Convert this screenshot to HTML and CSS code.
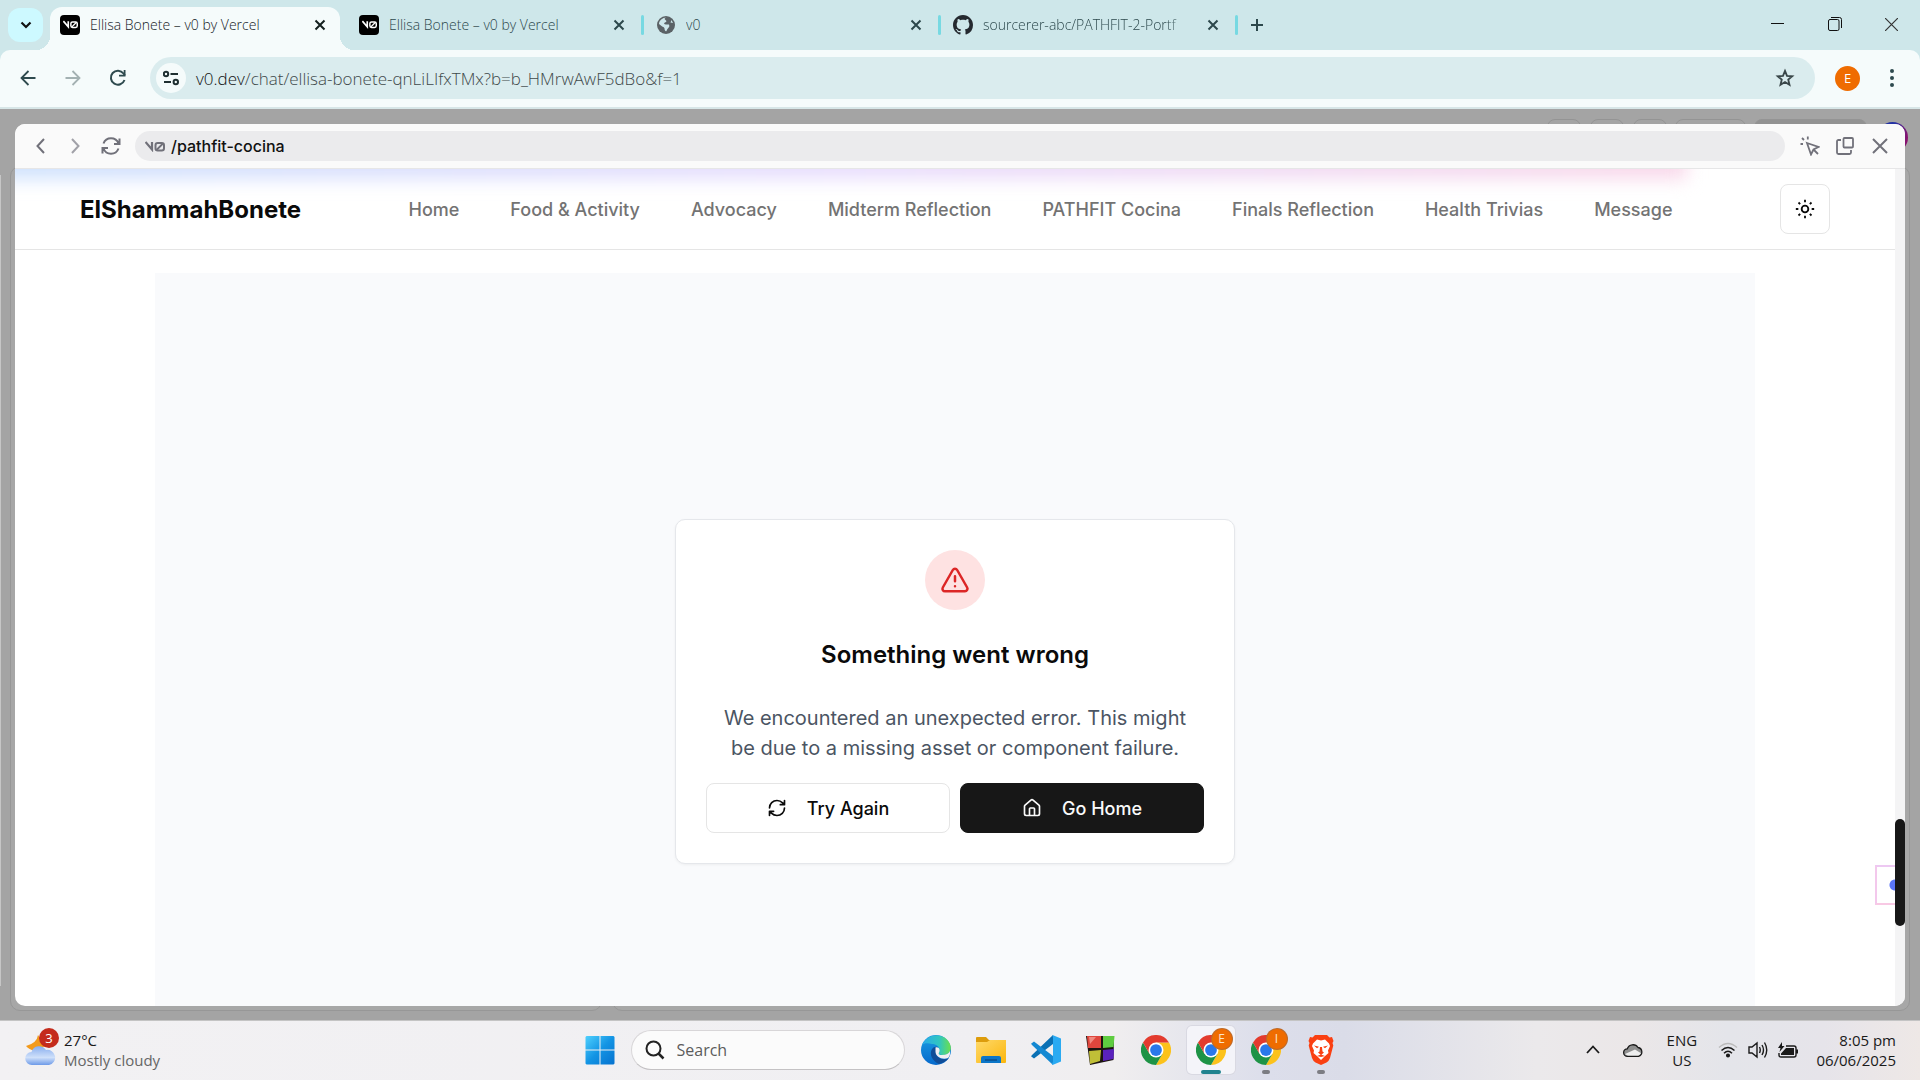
FILE: index.html
```html
<!DOCTYPE html>
<html lang="en">
<head>
<meta charset="utf-8">
<title>Ellisa Bonete – v0 by Vercel</title>
<link rel="stylesheet" href="styles.css">
</head>
<body>
<svg class="defs" aria-hidden="true">
  <defs>
    <symbol id="v0" viewBox="0 0 20 11"><path d="M.5 1 7 8.500V1" fill="none" stroke="currentColor" stroke-width="2.200"/><rect x="10.500" y="2" width="8.500" height="7.500" rx="2.200" fill="none" stroke="currentColor" stroke-width="2"/><path d="M11.500 9 18 2.500" stroke="currentColor" stroke-width="1.800"/></symbol>
    <symbol id="x" viewBox="0 0 12 12"><path d="M1.500 1.500l9 9M10.500 1.500l-9 9" stroke="currentColor" stroke-width="2" fill="none"/></symbol>
    <symbol id="refresh" viewBox="0 0 24 24"><path d="M3 12a9 9 0 0 1 9-9 9.750 9.750 0 0 1 6.740 2.740L21 8M21 3v5h-5M21 12a9 9 0 0 1-9 9 9.750 9.750 0 0 1-6.740-2.740L3 16M8 16H3v5" fill="none" stroke="currentColor" stroke-width="2" stroke-linecap="round" stroke-linejoin="round"/></symbol>
    <symbol id="chrome" viewBox="0 0 48 48">
      <path d="M24 12H44.800A24 24 0 0 1 24 48L34.400 30Z" fill="#fcc21b"/>
      <path d="M34.400 30 24 48A24 24 0 0 1 3.200 12L13.600 30Z" fill="#1e9346"/>
      <path d="M13.600 30 3.200 12A24 24 0 0 1 44.800 12H24Z" fill="#e33b2e"/>
      <circle cx="24" cy="24" r="12" fill="#fff"/><circle cx="24" cy="24" r="9.400" fill="#2a78ea"/>
    </symbol>
  </defs>
</svg>

<header class="browser">
  <div class="tabstrip">
    <button class="tab-search" aria-label="Search tabs"><svg width="12" height="8" viewBox="0 0 12 8"><path d="M1.500 1.500 6 6l4.500-4.500" fill="none" stroke="currentColor" stroke-width="2.200"/></svg></button>
    <div class="tab active">
      <span class="fav"><svg width="15" height="9"><use href="#v0"/></svg></span>
      <span class="title">Ellisa Bonete – v0 by Vercel</span>
      <button aria-label="Close tab"><svg width="12" height="12"><use href="#x"/></svg></button>
    </div>
    <span class="sep none"></span>
    <div class="tab">
      <span class="fav"><svg width="15" height="9"><use href="#v0"/></svg></span>
      <span class="title">Ellisa Bonete – v0 by Vercel</span>
      <button aria-label="Close tab"><svg width="12" height="12"><use href="#x"/></svg></button>
    </div>
    <span class="sep"></span>
    <div class="tab">
      <svg class="globe" width="20" height="20" viewBox="0 0 20 20"><circle cx="10" cy="10" r="9" fill="#5b6266"/><path d="M10.500 2.500c-2 .5-2.500 1.500-1 2.500s1 2-.5 2.500-1 2 1 2h3q1 2-.5 3.200t-2 3.300c-1 1-2-1-2-2.500s-3-2-5.500-4.500C3 5.500 6.500 2.500 10.500 2.500ZM15.500 5l1.500 3-2.500-.5Z" fill="#cee7ea"/></svg>
      <span class="title">v0</span>
      <button aria-label="Close tab"><svg width="12" height="12"><use href="#x"/></svg></button>
    </div>
    <span class="sep"></span>
    <div class="tab">
      <svg class="globe" width="20" height="20" viewBox="0 0 16 16"><path fill="#24292f" d="M8 0C3.580 0 0 3.580 0 8c0 3.540 2.290 6.530 5.470 7.590.4.070.55-.17.55-.38 0-.19-.01-.82-.01-1.490-2.010.37-2.530-.49-2.690-.94-.09-.23-.48-.94-.82-1.130-.28-.15-.68-.52-.01-.53.63-.01 1.080.58 1.230.82.72 1.210 1.870.87 2.330.66.07-.52.28-.87.51-1.070-1.780-.2-3.640-.89-3.640-3.950 0-.87.31-1.590.82-2.150-.08-.2-.36-1.020.08-2.120 0 0 .67-.21 2.200.82.64-.18 1.320-.27 2-.27s1.360.09 2 .27c1.530-1.040 2.200-.82 2.200-.82.44 1.100.16 1.920.08 2.120.51.56.82 1.270.82 2.150 0 3.070-1.870 3.750-3.650 3.950.29.25.54.73.54 1.480 0 1.070-.01 1.930-.01 2.200 0 .21.15.46.55.38A8.010 8.010 0 0 0 16 8c0-4.420-3.580-8-8-8Z"/></svg>
      <span class="title fade">sourcerer-abc/PATHFIT-2-Portf</span>
      <button aria-label="Close tab"><svg width="12" height="12"><use href="#x"/></svg></button>
    </div>
    <span class="sep"></span>
    <button class="new-tab" aria-label="New tab"><svg width="14" height="14" viewBox="0 0 14 14"><path d="M7 1v12M1 7h12" stroke="currentColor" stroke-width="2"/></svg></button>
    <div class="window-controls">
      <button aria-label="Minimize"><svg width="13" height="13"><path d="M0 5.500h13" stroke="#111"/></svg></button>
      <button aria-label="Restore"><svg width="14" height="14" viewBox="0 0 14 14"><rect x=".5" y="2.500" width="10.500" height="11" rx="1.500" fill="none" stroke="#111"/><path d="M3 .5h8.500q2 0 2 2V11" fill="none" stroke="#111"/></svg></button>
      <button aria-label="Close"><svg width="13" height="13"><path d="M0 0l13 13M13 0 0 13" stroke="#333" stroke-width="1.200"/></svg></button>
    </div>
  </div>
  <div class="toolbar">
    <button class="tool" aria-label="Back"><svg width="16" height="16" viewBox="0 0 16 16"><path d="M15.500 8H1.500M8.500 1 1.500 8l7 7" fill="none" stroke="currentColor" stroke-width="1.800"/></svg></button>
    <button class="tool dim" aria-label="Forward"><svg width="16" height="16" viewBox="0 0 16 16"><path d="M.5 8h14M7.500 1l7 7-7 7" fill="none" stroke="currentColor" stroke-width="1.800"/></svg></button>
    <button class="tool" aria-label="Reload"><svg width="18" height="18" viewBox="0 0 18 18"><path d="M15.500 11A7 7 0 1 1 14.500 4.500L16 6.500" fill="none" stroke="currentColor" stroke-width="2"/><path d="M16.500 1v6.500H10V5.700h4.700V1Z" fill="currentColor"/></svg></button>
    <div class="omnibox">
      <button class="site-info" aria-label="Site information"><svg width="16" height="16" viewBox="0 0 16 16" fill="none" stroke="#1f2f31" stroke-width="2"><circle cx="3" cy="4" r="2.200"/><path d="M7.500 4H15M1 12h7"/><circle cx="12.800" cy="12" r="2.200"/></svg></button>
      <a class="url" href="#"><b>v0.dev</b>/chat/ellisa-bonete-qnLiLIfxTMx?b=b_HMrwAwF5dBo&amp;f=1</a>
      <button class="star" aria-label="Bookmark"><svg width="20" height="20" viewBox="0 0 24 24"><path d="m12 3.500 2.400 5.900 6.300.5-4.800 4.100 1.500 6.200-5.400-3.400-5.400 3.400 1.500-6.200-4.800-4.100 6.300-.5Z" fill="none" stroke="#3a4749" stroke-width="2.200"/></svg></button>
    </div>
    <button class="avatar" aria-label="Profile">E</button>
    <button class="dots" aria-label="Menu"><svg width="4" height="18" fill="#2e4a4e"><circle cx="2" cy="2" r="2"/><circle cx="2" cy="9" r="2"/><circle cx="2" cy="16" r="2"/></svg></button>
  </div>
</header>

<main class="stage">
  <div class="behind" aria-hidden="true">
    <i class="edge"></i><i class="pane chat"></i><i class="pane preview"></i>
    <div class="stubs"><i></i><i></i><i></i><i class="wide"></i><i class="solid"></i><i class="orb"></i></div>
  </div>
  <section class="modal">
    <div class="modal-bar">
      <button aria-label="Back"><svg width="9" height="16" viewBox="0 0 9 16"><path d="M8 1 1.500 8 8 15" fill="none" stroke="currentColor" stroke-width="2"/></svg></button>
      <button class="faint" aria-label="Forward"><svg width="9" height="16" viewBox="0 0 9 16"><path d="M1 1l6.500 7L1 15" fill="none" stroke="currentColor" stroke-width="2"/></svg></button>
      <button aria-label="Reload"><svg width="20" height="18" viewBox="0 0 20 18"><path d="M2.500 6.500a8 8 0 0 1 15 0M17.500 11.500a8 8 0 0 1-15 0M18.500 1.500v5.500h-5.500M1.500 16.500V11h5.500" fill="none" stroke="currentColor" stroke-width="2"/></svg></button>
      <div class="path"><svg width="20" height="11"><use href="#v0"/></svg><span>/pathfit-cocina</span></div>
      <button aria-label="Select element"><svg width="20" height="20" viewBox="0 0 20 20" fill="none" stroke="currentColor" stroke-width="1.800"><path d="M7 7l11.500 4-5 2.500L11 18.500ZM13.500 13.500l4.500 4.500M7.800.5v3M.5 8h2.500M2 2l2 2"/></svg></button>
      <button aria-label="Open in new window"><svg width="18" height="18" viewBox="0 0 18 18" fill="none" stroke="currentColor" stroke-width="1.800"><rect x="7.500" y="1" width="9.500" height="9.500" rx="1"/><path d="M5 3H2.500Q1 3 1 4.500v11Q1 17 2.500 17h11q1.500 0 1.500-1.500V13"/></svg></button>
      <button aria-label="Close preview"><svg width="16" height="16" viewBox="0 0 16 16"><path d="M1 1l14 14M15 1 1 15" stroke="currentColor" stroke-width="2"/></svg></button>
    </div>
    <div class="viewport">
      <div class="page">
        <nav class="site-nav">
          <i class="glow"></i>
          <a class="brand" href="#">ElShammahBonete</a>
          <div class="links">
            <a href="#">Home</a><a href="#">Food &amp; Activity</a><a href="#">Advocacy</a><a href="#">Midterm Reflection</a><a href="#">PATHFIT Cocina</a><a href="#">Finals Reflection</a><a href="#">Health Trivias</a><a href="#">Message</a>
          </div>
          <button class="theme" aria-label="Toggle theme"><svg width="20" height="20" viewBox="0 0 24 24" fill="none" stroke="currentColor" stroke-width="2.200"><circle cx="12" cy="12" r="4"/><path d="M12 1v3M12 20v3M4.200 4.200l2 2M17.800 17.800l2 2M1 12h3M20 12h3M6.200 17.800l-2 2M19.800 4.200l-2 2"/></svg></button>
        </nav>
        <div class="panel">
          <div class="card">
            <span class="alert"><svg width="30" height="30" viewBox="0 0 24 24" fill="none" stroke="#dc2626" stroke-width="2" stroke-linecap="round" stroke-linejoin="round"><path d="m21.730 18-8-14a2 2 0 0 0-3.480 0l-8 14A2 2 0 0 0 4 21h16a2 2 0 0 0 1.730-3M12 9v4M12 17h.01"/></svg></span>
            <h1>Something went wrong</h1>
            <p>We encountered an unexpected error. This might be due to a missing asset or component failure.</p>
            <div class="actions">
              <button><svg width="20" height="20"><use href="#refresh"/></svg>Try Again</button>
              <button class="dark"><svg width="20" height="20" viewBox="0 0 24 24" fill="none" stroke="currentColor" stroke-width="2" stroke-linecap="round" stroke-linejoin="round"><path d="M15 21v-8a1 1 0 0 0-1-1h-4a1 1 0 0 0-1 1v8M3 10a2 2 0 0 1 .7-1.500l7-6a2 2 0 0 1 2.600 0l7 6A2 2 0 0 1 21 10v9a2 2 0 0 1-2 2H5a2 2 0 0 1-2-2z"/></svg>Go Home</button>
            </div>
          </div>
        </div>
        <i class="bubble"></i>
      </div>
      <div class="scrollbar"><i></i></div>
    </div>
  </section>
</main>

<footer class="taskbar">
  <div class="weather">
    <span class="weather-icon">
      <svg width="31" height="32" viewBox="0 0 31 32"><defs><linearGradient id="cl" x1="0" y1="0" x2="0" y2="1"><stop offset="0" stop-color="#87adee"/><stop offset=".6" stop-color="#cfe0fa"/><stop offset="1" stop-color="#6d9ae8"/></linearGradient></defs><path d="M13 1q-1 8-12 11 4 5 10 4l10-4Z" fill="#f29a1c"/><path d="M7 31a6.500 6.500 0 0 1-.5-13A8 8 0 0 1 21 16a7.500 7.500 0 0 1 3 15Z" fill="url(#cl)"/></svg>
      <b class="badge">3</b>
    </span>
    <div><div class="temp">27°C</div><div class="cond">Mostly cloudy</div></div>
  </div>
  <div class="apps">
    <button aria-label="Start"><svg width="30" height="30" viewBox="0 0 30 30"><defs><linearGradient id="win" x1="0" y1="0" x2="1" y2="1"><stop offset="0" stop-color="#4fd0fd"/><stop offset=".5" stop-color="#1394e4"/><stop offset="1" stop-color="#0672cf"/></linearGradient></defs><path d="M1.500 1H14.500V14.500H.5V2Zm14 0H28.500l1 1V14.500H15.500ZM.5 15.500H14.500V29.500H1.500l-1-1Zm15 0H29.500V28.500l-1 1H15.500Z" fill="url(#win)"/></svg></button>
    <label class="search"><svg width="20" height="20" viewBox="0 0 20 20" fill="none" stroke="#222"><circle cx="8.500" cy="8.500" r="7" stroke-width="2"/><path d="m13.500 13.500 5 5" stroke-width="2.500"/></svg><input type="text" placeholder="Search" aria-label="Search"></label>
    <button aria-label="Edge"><svg width="30" height="30" viewBox="0 0 30 30"><defs><linearGradient id="e1"><stop offset="0" stop-color="#2aa9ea"/><stop offset=".6" stop-color="#30c6c0"/><stop offset="1" stop-color="#6be04c"/></linearGradient><linearGradient id="e2" x1="0" y1="0" x2="0" y2="1"><stop offset="0" stop-color="#1b9de2"/><stop offset="1" stop-color="#0669cc"/></linearGradient></defs><circle cx="15" cy="15" r="15" fill="url(#e2)"/><path d="M1 10C6-2 24-3 29 9c3 8-3 11-8 11-3 0-4-1-3-3 2-4-2-8-7-8C7 8 3 8 1 10Z" fill="url(#e1)"/><path d="M11 14c-3 5 0 12 7 15 4-1 8-3 10-6-6 3-13 0-13-6q0-3 2-5-4-1-6 2Z" fill="#104d98"/><path d="M14.500 12.500c4-1 5 3 3.500 5-1 2 1 2.500 3 2.500 4 0 7-1.500 8-4 .5 4-1 6-2 7-6 2-12-1-12.500-6Z" fill="#f1eff1"/></svg></button>
    <button aria-label="File Explorer"><svg width="30" height="28" viewBox="0 0 30 28"><defs><linearGradient id="fo" x1="0" y1="0" x2="1" y2="1"><stop offset="0" stop-color="#ffd96a"/><stop offset="1" stop-color="#fbb60c"/></linearGradient></defs><path d="M0 2Q0 1 1 1H10l3 3H30V9H0Z" fill="#dd9c0c"/><path d="M0 6H11l3-2H30V26q0 1-1 1H1q-1 0-1-1Z" fill="url(#fo)"/><path d="M5 27V22q0-2 2-2H23q2 0 2 2v5Z" fill="#0c76c8"/><path d="M9 24H21" stroke="#0a4f8c" stroke-width="1.500"/></svg></button>
    <button aria-label="Visual Studio Code"><svg width="30" height="30" viewBox="0 0 30 30"><path d="M22 0 1 20q-1.500 1.500 0 2l2 1.500 19-14.500Z" fill="#0a70b4"/><path d="M22 30 1 10Q-.5 8.500 1 8l2-1.500 19 14.500Z" fill="#1488d2"/><path d="M21.500 0 30 3.500V26.500L21.500 30q-1-1 .5-3V3Z" fill="#2aaaf2"/></svg></button>
    <button aria-label="Code::Blocks"><svg width="29" height="30" viewBox="0 0 29 30"><path d="M0 1H28L27.500 25 4 30Z" fill="#1c1410"/><path d="M1 1H15V13H2Z" fill="#df463d"/><path d="M3 2h7L4 9Z" fill="#f08a80"/><path d="M17 1H28.500L27.500 12 17 13Z" fill="#5fcc40"/><path d="M3 16 15 15 14 26 4 29Z" fill="#c0bf37"/><path d="M17 15 28 14 27.500 24 17 26Z" fill="#5a22bd"/></svg></button>
    <button aria-label="Chrome"><svg width="30" height="30"><use href="#chrome"/></svg></button>
    <button class="current" aria-label="Chrome, profile E"><svg width="30" height="30"><use href="#chrome"/></svg><b class="profile">E</b></button>
    <button class="open" aria-label="Chrome, profile I"><svg width="30" height="30"><use href="#chrome"/></svg><b class="profile">I</b></button>
    <button class="open" aria-label="Brave"><svg width="26" height="30" viewBox="0 0 26 30"><path d="M7 0H19l2.500 2.500L24 2l1.500 4-1 2 .8 2.500L22 23q-1 3-3.500 4.500L13 30l-5.500-2.500Q5 26 4 23L.7 10.500 1.500 8 .5 6 2 2l2.500.5Z" fill="#fa4012"/><path d="M9 4.500 13 5.500 17 4.500 21 8.500 22 11 20 15.500 20.500 18 16.500 21.500 13 25 9.500 21.500 5.500 18 6 15.500 4 11 5 8.500Z" fill="#fff"/><path d="M6 10.500l5 1.200-2 1.500ZM20 10.500l-5 1.200 2 1.500ZM12 12h2l.5 4.500 1.500 1-3 2.500-3-2.500 1.500-1ZM9 21l4-1.500 4 1.500-4 1Z" fill="#fa4012"/></svg></button>
  </div>
  <div class="tray">
    <button aria-label="Show hidden icons"><svg width="14" height="9" viewBox="0 0 14 9"><path d="M1 8l6-6.500L13 8" fill="none" stroke="#1a1a1a" stroke-width="1.800"/></svg></button>
    <button aria-label="OneDrive"><svg width="20" height="14" viewBox="0 0 20 14"><path d="M4.500 13.300a3.700 3.700 0 0 1-.2-7.500A6 6 0 0 1 15 4.500a4.500 4.500 0 0 1 .5 8.800Z" fill="#8f8f8f"/><path d="M2 11 12 6.500 18.500 10.500 16 13H5Z" fill="#eee"/><path d="M4.500 13.300a3.700 3.700 0 0 1-.2-7.500A6 6 0 0 1 15 4.500a4.500 4.500 0 0 1 .5 8.800Z" fill="none" stroke="#1a1a1a" stroke-width="1.300"/></svg></button>
    <div class="lang">ENG<br>US</div>
    <div class="status">
      <svg width="20" height="16" viewBox="0 0 20 16" fill="none" stroke="#1a1a1a" stroke-width="1.500"><path d="M1 5.500q9-8 18 0" stroke="#bbb"/><path d="M3.500 8.500q6.500-6 13 0M6 11.300q4-4 8 0"/><circle cx="10" cy="13.500" r="1.300" fill="#1a1a1a"/></svg>
      <svg width="20" height="18" viewBox="0 0 20 18" fill="none" stroke="#1a1a1a" stroke-width="1.400"><path d="M1 6H4L9 2V16L4 12H1ZM11.500 6q1.500 3 0 6M14 4q3 5 0 10M16.500 1.500q4.500 7.500 0 15"/></svg>
      <svg width="20" height="16" viewBox="0 0 20 16"><path d="M8 4h8q2 0 2 2v7q0 2-2 2H3q-2 0-2-2V11" fill="none" stroke="#1a1a1a" stroke-width="1.400"/><path d="M8 6h8v7H3V11.500ZM18 7.500h2v4h-2ZM4 0 0 6H2.500L1.500 10 6.500 4H4Z" fill="#1a1a1a"/></svg>
    </div>
    <div class="clock">8:05 pm<br>06/06/2025</div>
  </div>
</footer>
</body>
</html>
```
FILE: styles.css
```css
* { box-sizing: border-box; }
html, body { height: 100%; }
body {
  margin: 0;
  display: flex;
  flex-direction: column;
  overflow: hidden;
  font-family: "Open Sans", "Noto Sans", sans-serif;
  font-size: 15px;
  color: #1a1a1a;
}
button {
  border: 0;
  padding: 0;
  background: none;
  font: inherit;
  color: inherit;
  display: flex;
  align-items: center;
  justify-content: center;
  flex: none;
}
a { color: inherit; text-decoration: none; }
svg { display: block; flex: none; }
i { display: block; }
.defs { position: absolute; width: 0; height: 0; }

/* Browser chrome */
.browser { background: #cee7ea; flex: none; }
.tabstrip { display: flex; height: 50px; padding-left: 8px; color: #2c484c; }
.tab-search { width: 35px; height: 34px; margin: 8px 7px 0 0; border-radius: 12px; background: #cdf9ff; color: #111; }
.tab { position: relative; display: flex; align-items: center; width: 290px; height: 43px; margin-top: 7px; padding: 0 8px 8px 10px; font-size: 14px; }
.tab.active { background: #f5fbfb; border-radius: 12px 12px 0 0; color: #14201f; }
.tab.active::before, .tab.active::after { content: ""; position: absolute; bottom: 0; width: 14px; height: 14px; }
.tab.active::before { right: 100%; background: radial-gradient(circle at 0 0, transparent 14px, #f5fbfb 14px); }
.tab.active::after { left: 100%; background: radial-gradient(circle at 100% 0, transparent 14px, #f5fbfb 14px); }
.fav { display: flex; align-items: center; justify-content: center; width: 20px; height: 20px; border-radius: 4px; background: #000; color: #fff; }
.title { flex: 1; min-width: 0; margin: 0 4px 0 10px; overflow: hidden; white-space: nowrap; font-weight: 300; }
.fade { -webkit-mask-image: linear-gradient(90deg, #000 85%, transparent); mask-image: linear-gradient(90deg, #000 85%, transparent); }
.tab button { width: 24px; height: 24px; }
.sep { width: 3px; height: 20px; margin: 15px 2px 0; border-radius: 2px; background: #77d9e2; }
.sep.none { background: none; margin-right: 4px; }
.new-tab { width: 34px; height: 34px; margin-top: 8px; }
.window-controls { display: flex; margin-left: auto; }
.window-controls button { width: 57px; height: 48px; }
.toolbar { display: flex; align-items: center; height: 59px; padding: 0 0 1px 5px; background: #f5fbfb; border-bottom: 2px solid #d7e6e7; border-radius: 10px 10px 0 0; color: #2e4a4e; }
.tool { width: 45px; height: 40px; }
.dim { color: #a3b1b2; }
.omnibox { display: flex; align-items: center; flex: 1; height: 42px; margin-left: 10px; padding: 0 20px 0 6px; border-radius: 21px; background: #daecee; }
.site-info { width: 30px; height: 30px; border-radius: 50%; background: #f5fbfb; }
.url { flex: 1; margin-left: 10px; font-size: 17px; font-weight: 300; color: #40494a; }
.url b { font-weight: 300; color: #111; }
.avatar { width: 25px; height: 25px; margin-left: 20px; border-radius: 50%; background: #ef6c00; color: #fff; font-size: 13px; }
.dots { width: 24px; height: 30px; margin: 0 16px 0 20px; }

/* Dimmed workspace with the preview over it */
.stage { position: relative; flex: 1; min-height: 0; padding: 15px 15px 14px; background: #a4a4a4; }
.behind i { position: absolute; }
.edge { left: 0; top: 66px; bottom: 34px; width: 1px; background: #c6c6c6; }
.pane { border: 1px solid #979797; border-radius: 10px; background: #a7a7a7; top: 57px; bottom: 9px; }
.chat { left: 10px; width: 592px; }
.preview { left: 612px; right: 10px; }
.stubs i { top: 10px; height: 34px; width: 34px; border: 1px solid #949494; border-radius: 8px; }
.stubs i:nth-child(1) { right: 339px; }
.stubs i:nth-child(2) { right: 296px; }
.stubs i:nth-child(3) { right: 253px; }
.stubs .wide { right: 174px; width: 71px; }
.stubs .solid { right: 53px; width: 113px; background: #929292; }
.stubs .orb { top: 13px; right: 12px; width: 31px; height: 31px; border: 0; border-radius: 50%; background: linear-gradient(100deg, #2432a4 50%, #a10a62); }
.modal { position: relative; display: flex; flex-direction: column; height: 100%; border-radius: 10px; overflow: hidden; background: #fff; font-family: Inter, "Liberation Sans", sans-serif; }
.modal-bar { display: flex; align-items: center; flex: none; height: 45px; padding: 0 8px; background: #fafafa; border-bottom: 1px solid #e6e6e7; color: #71717a; }
.modal-bar button { width: 35px; height: 35px; }
.modal-bar .faint { color: #a1a1a8; }
.path { display: flex; align-items: center; gap: 6px; flex: 1; height: 30px; margin: 0 7px; padding-left: 10px; border-radius: 15px; background: #ebebed; font-size: 16px; font-weight: 500; }
.path span { color: #111; }
.viewport { display: flex; flex: 1; min-height: 0; }
.page { position: relative; flex: 1; overflow: hidden; }
.scrollbar { width: 10px; background: #f4f4f5; padding-top: 650px; }
.scrollbar i { height: 107px; border-radius: 5px; background: #171717; }

/* Site inside the preview */
.site-nav { position: relative; display: flex; align-items: center; justify-content: space-between; height: 81px; padding: 0 65px; border-bottom: 1px solid #e5e5e5; overflow: hidden; }
.glow { position: absolute; left: -20px; top: -20px; width: 90%; height: 30px; background: linear-gradient(90deg, #cfe2fd, #e8ddfd 50%, #f9d8ea); filter: blur(9px); }
.site-nav a, .theme { position: relative; }
.brand { font-size: 24px; font-weight: 700; color: #0a0a0a; }
.links { display: flex; gap: 51px; font-size: 18px; font-weight: 500; color: #737373; }
.theme { width: 50px; height: 50px; border: 1px solid #e5e5e5; border-radius: 8px; background: #fff; color: #0a0a0a; }
.panel { display: flex; align-items: center; justify-content: center; max-width: 1600px; min-height: calc(100vh - 243px); margin: 23px auto 0; background: #f9fafc; }
.card { display: flex; flex-direction: column; align-items: center; width: 560px; padding: 30px; border: 1px solid #e5e7eb; border-radius: 10px; background: #fff; box-shadow: 0 1px 3px #0000000d; text-align: center; color: #0a0a0a; }
.alert { display: flex; align-items: center; justify-content: center; width: 60px; height: 60px; border-radius: 50%; background: #fee2e2; }
.card h1 { margin: 30px 0 0; font-size: 24px; line-height: 30px; font-weight: 600; }
.card p { margin: 33px 0 20px; padding: 0 10px; font-size: 20px; line-height: 30px; color: #4b5563; }
.actions { display: flex; gap: 10px; align-self: stretch; }
.actions button { flex: 1; gap: 20px; height: 50px; border: 1px solid #e5e5e5; border-radius: 8px; font-size: 18px; font-weight: 500; }
.actions .dark { border-color: #171717; background: #171717; color: #fafafa; }
.bubble { position: absolute; right: -20px; top: 696px; width: 40px; height: 40px; border: 2px solid; border-color: #edc8f2 #f3c8ec #f8c9e4; background: radial-gradient(circle at 18px 18px, #5b76f8 5px, transparent 6px); }

/* Taskbar */
.taskbar { display: grid; grid-template-columns: 1fr auto 1fr; align-items: center; flex: none; height: 60px; padding-bottom: 2px; border-top: 1px solid #c4c4c4; background: linear-gradient(90deg, #f2f1f3, #f0eff2 52%, #f0eeef 58%, #dcdeeb 66%, #dadce8 70%, #ebe9eb 80%, #ebe7e8 85%, #e4e5ea 90%, #e6e4ea 95%, #eee8e6); line-height: 20px; }
.weather { display: flex; gap: 8px; padding-left: 25px; }
.weather-icon { position: relative; padding-top: 4px; }
.badge { position: absolute; left: 14px; top: -2px; width: 20px; height: 20px; border-radius: 50%; background: #c42b1c; color: #fff; font-size: 13px; font-weight: 400; text-align: center; }
.cond { color: #666; }
.apps { display: flex; gap: 7px; align-items: center; }
.apps button { position: relative; width: 48px; height: 48px; border-radius: 5px; }
.search { display: flex; align-items: center; gap: 12px; width: 274px; height: 40px; padding-left: 13px; border: 1px solid #d8d6d8; border-bottom-color: #c4c2c4; border-radius: 20px; background: #fbfbfb; }
.search input { flex: 1; min-width: 0; border: 0; padding: 0; background: none; font: inherit; font-size: 16px; outline: 0; }
.search input::placeholder { color: #5c5c5c; opacity: 1; }
.apps .current { background: #f4f4f9; box-shadow: 0 0 0 1px #d9d9e2; }
.apps .current::after, .apps .open::after { content: ""; position: absolute; bottom: 0; width: 8px; height: 4px; border-radius: 2px; background: #7c7d83; }
.apps .current::after { width: 20px; background: #21838f; }
.profile { position: absolute; right: 3px; top: 3px; width: 20px; height: 20px; border-radius: 50%; background: #ef6c00; box-shadow: 0 0 0 1px #bd6a2a; color: #fbe3cc; font-size: 12px; font-weight: 400; }
.tray { display: flex; align-items: center; justify-content: flex-end; padding-right: 24px; }
.tray button { width: 40px; height: 40px; }
.lang { width: 57px; text-align: center; }
.status { display: flex; align-items: center; gap: 10px; margin: 0 18px 0 8px; }
.clock { text-align: right; }
```
